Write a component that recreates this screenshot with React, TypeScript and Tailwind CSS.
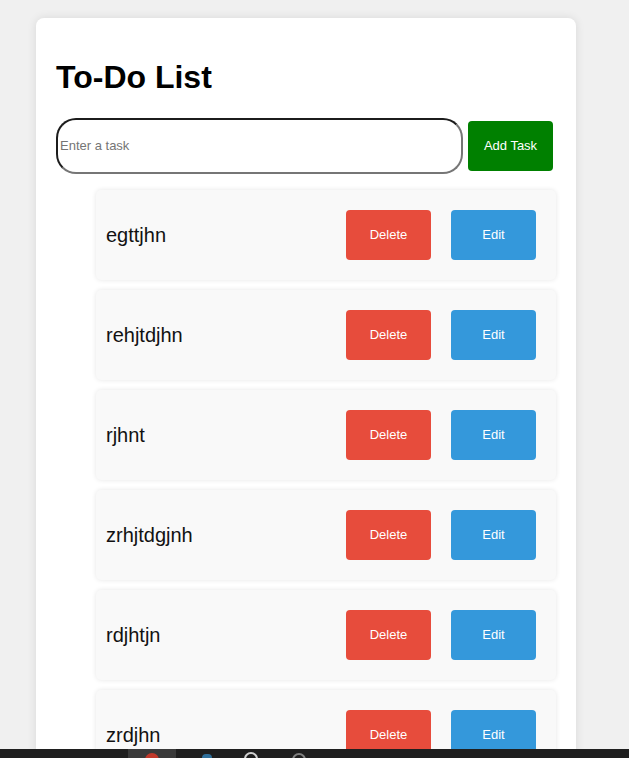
import React from "react";

const tasks = ["egttjhn", "rehjtdjhn", "rjhnt", "zrhjtdgjnh", "rdjhtjn", "zrdjhn"];

export default function App() {
  return (
    <div className="min-h-screen bg-[#f0f0f0] pt-[18px] pl-[36px] pb-[40px] [font-family:'Liberation_Sans',Arial,sans-serif]">
      <div className="w-[540px] rounded-[8px] bg-white p-[20px] shadow-[0_0_10px_rgba(0,0,0,0.1)]">
        <h1 className="my-[21.44px] text-[32px] font-bold leading-[37px] text-black">To-Do List</h1>
        <div className="flex items-center gap-[5px]">
          <input
            type="text"
            placeholder="Enter a task"
            className="h-[56px] w-[407px] rounded-[20px] border-[2px] border-solid border-t-[#1c1c1c] border-l-[#1c1c1c] border-b-[#767676] border-r-[#767676] bg-white pl-[2px] text-[13px] text-black outline-none placeholder:text-[#757575]"
          />
          <button className="h-[50px] w-[85px] rounded-[4px] bg-[#008000] text-[13px] text-white">
            Add Task
          </button>
        </div>
        <ul className="mt-[16px] flex flex-col gap-[10px] pl-[40px]">
          {tasks.map((t) => (
            <li
              key={t}
              className="flex h-[90px] items-center rounded-[5px] bg-[#f9f9f9] pl-[10px] pr-[20px] shadow-[0_0_5px_rgba(0,0,0,0.1)]"
            >
              <span className="flex-1 text-[20px] text-[#111]">{t}</span>
              <button className="h-[50px] w-[85px] rounded-[4px] bg-[#e74c3c] text-[13px] text-white">
                Delete
              </button>
              <button className="ml-[20px] h-[50px] w-[85px] rounded-[4px] bg-[#3498db] text-[13px] text-white">
                Edit
              </button>
            </li>
          ))}
        </ul>
      </div>
      <div className="fixed bottom-0 left-0 right-0 h-[9px] overflow-hidden bg-[#1f1f1f]">
        <div className="absolute left-[128px] top-0 h-full w-[48px] bg-[#3a3a3a]" />
        <div className="absolute left-[145px] top-[4px] h-[14px] w-[14px] rounded-full bg-[#c0392b]" />
        <div className="absolute left-[202px] top-[5px] h-[12px] w-[10px] rounded-sm bg-[#2f6f9a]" />
        <div className="absolute left-[244px] top-[3px] h-[14px] w-[14px] rounded-full border-[2px] border-[#d0d0d0]" />
        <div className="absolute left-[292px] top-[4px] h-[14px] w-[14px] rounded-full border-[2px] border-[#808080]" />
      </div>
    </div>
  );
}
